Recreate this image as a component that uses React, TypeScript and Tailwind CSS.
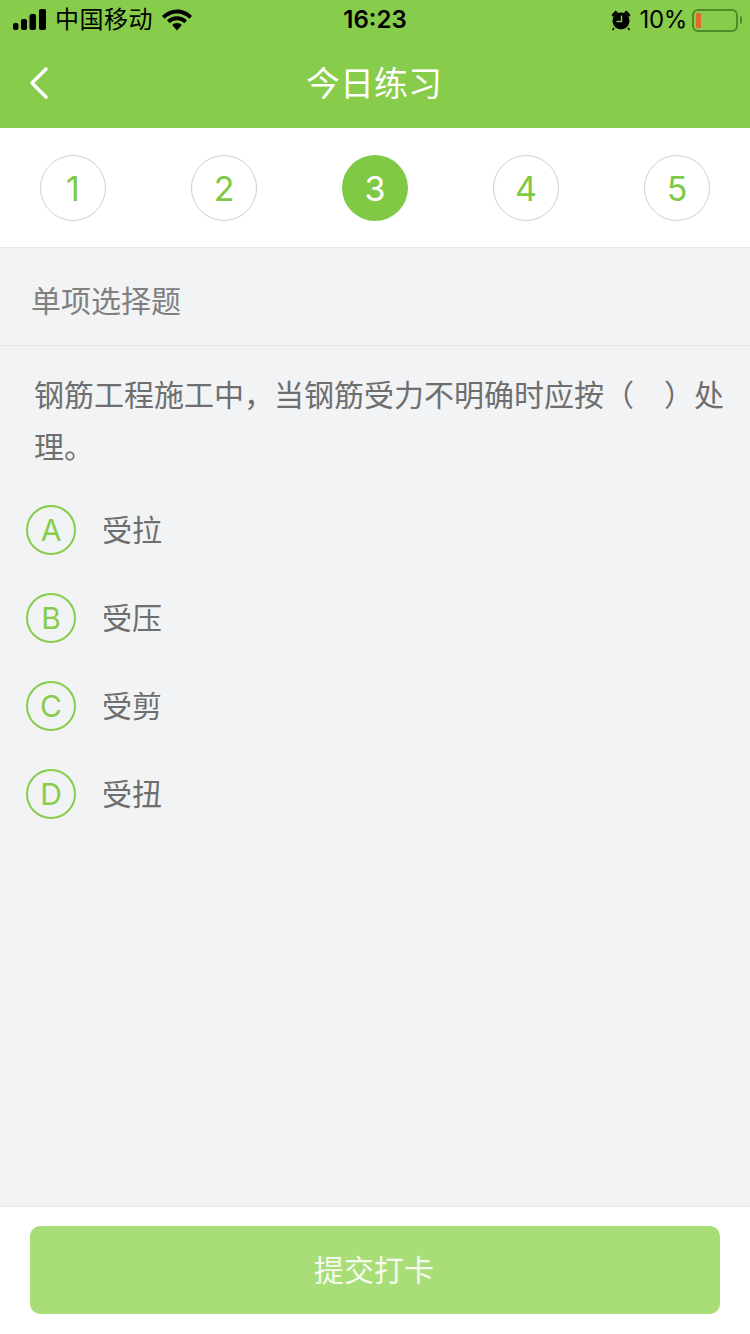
const font = { fontFamily: '"Inter", "Noto Sans CJK SC", sans-serif' }

const steps = [1, 2, 3, 4, 5]
const options = [
  { key: 'A', text: '受拉' },
  { key: 'B', text: '受压' },
  { key: 'C', text: '受剪' },
  { key: 'D', text: '受扭' },
]

function StatusBar() {
  return (
    <div className="h-10 flex items-center justify-between relative text-black">
      <div className="flex items-center pl-[13px]">
        {/* signal */}
        <svg width="33" height="22" viewBox="0 0 33 22" fill="currentColor">
          <rect x="0" y="14" width="5.500" height="7" rx="2" />
          <rect x="8" y="10" width="6" height="11" rx="2" />
          <rect x="16.500" y="5" width="6.500" height="16" rx="2" />
          <rect x="26" y="0" width="7" height="21" rx="2" />
        </svg>
        <span className="ml-[9px] text-[24px] leading-none tracking-[0.5px]">中国移动</span>
        {/* wifi */}
        <svg className="ml-[9px]" width="30" height="22" viewBox="0 0 30 22" fill="currentColor">
          <path d="M15 0.500C9 0.500 4 2.900 0 6.900L2.600 9.800C6 6.400 10.200 4.400 15 4.400s9 2 12.400 5.400L30 6.900C26 2.900 21 0.500 15 0.500z" />
          <path d="M15 7.200c-3.900 0-7.300 1.500-10 4.100l2.700 2.900c2-1.900 4.500-3 7.300-3s5.300 1.100 7.300 3l2.700-2.900c-2.700-2.600-6.100-4.100-10-4.100z" />
          <path d="M15 14c-1.900 0-3.500 .7-4.800 1.900L15 21.500l4.800-5.600C18.500 14.700 16.900 14 15 14z" />
        </svg>
      </div>
      <span className="absolute left-0 right-0 text-center text-[24px] font-semibold leading-none">16:23</span>
      <div className="flex items-center pr-[8px]">
        {/* alarm */}
        <svg width="20" height="22" viewBox="0 0 20 22" fill="currentColor">
          <circle cx="10" cy="12" r="8.500" />
          <path d="M0.500 6 L4.500 1.500 L7 3.500 L2 8z M19.500 6 L15.500 1.500 L13 3.500 L18 8z" />
          <path d="M3 19l-1.500 2M17 19l1.500 2" stroke="currentColor" strokeWidth="1.500" />
          <path d="M10.500 6.500v6H5.500" fill="none" stroke="#87cc4b" strokeWidth="1.500" />
        </svg>
        <span className="ml-[8px] text-[24px] leading-none tracking-[-0.3px]">10%</span>
        {/* battery */}
        <div className="ml-[5px] w-[46px] h-[23px] rounded-[6px] border-2 border-[#4f8a2a] flex items-center pl-[2px]">
          <div className="w-[5px] h-[15px] rounded-[1px] bg-[#e4672f]" />
        </div>
        <div className="ml-[2px] w-[2px] h-[8px] rounded-r-sm bg-[#4f8a2a]" />
      </div>
    </div>
  )
}

export default function App() {
  return (
    <div className="w-[750px] h-[1334px] bg-[#f2f3f5] flex flex-col" style={font}>
      <header className="h-[128px] bg-[#87cc4b]">
        <StatusBar />
        <div className="h-[88px] relative flex items-center justify-center">
          <svg className="absolute left-[28px] top-[26px]" width="22" height="34" viewBox="0 0 22 34" fill="none" stroke="white" strokeWidth="3.500" strokeLinecap="round" strokeLinejoin="round">
            <path d="M18 3 L4 17 L18 31" />
          </svg>
          <h1 className="text-[34px] leading-none text-white font-normal pr-[2px]">今日练习</h1>
        </div>
      </header>

      <div className="h-[120px] bg-white border-b border-[#e6e6e6] flex items-center justify-between px-[40px] pt-[1px]">
        {steps.map(n => (
          <div
            key={n}
            className={
              n === 3
                ? 'w-[66px] h-[66px] rounded-full bg-[#7fc944] text-white flex items-center justify-center text-[34px]'
                : 'w-[66px] h-[66px] rounded-full border border-[#cfcfcf] text-[#7fc944] flex items-center justify-center text-[34px]'
            }
          >
            {n}
          </div>
        ))}
      </div>

      <div className="h-[98px] border-b border-[#e6e6e6] flex items-center pl-[31px] pt-[10px] text-[30px] text-[#808080]">
        单项选择题
      </div>

      <p className="pl-[34px] pr-[20px] pt-[23px] text-[30px] leading-[52px] text-[#6e6e6e]">
        钢筋工程施工中，当钢筋受力不明确时应按（　）处理。
      </p>

      <div className="flex-1 pt-[13px] pl-[26px]">
        {options.map(o => (
          <div key={o.key} className="h-[88px] flex items-center">
            <div className="w-[50px] h-[50px] rounded-full border-2 border-[#87cc4b] text-[#87cc4b] flex items-center justify-center text-[30px]">
              {o.key}
            </div>
            <span className="ml-[26px] text-[30px] text-[#6e6e6e]">{o.text}</span>
          </div>
        ))}
      </div>

      <footer className="h-[128px] bg-white border-t border-[#e6e6e6] px-[30px] pt-[19px]">
        <button className="w-full h-[88px] rounded-[10px] bg-[#a9dd77] text-[#f4fbee] text-[30px] pr-[2px]">提交打卡</button>
      </footer>
    </div>
  )
}
